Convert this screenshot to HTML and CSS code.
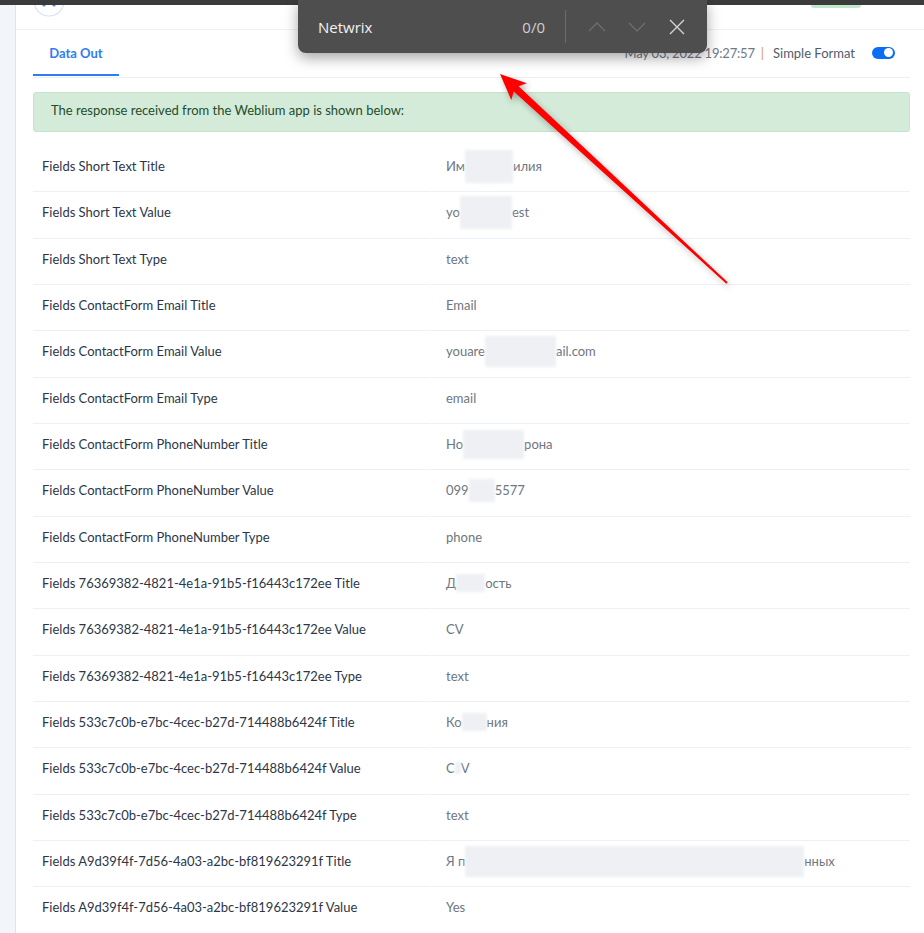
FILE: index.html
```html
<!DOCTYPE html>
<html lang="en">
<head>
	<meta charset="UTF-8">
	<title>Data Out</title>
	<link rel="stylesheet" href="styles.css">
</head>
<body>
	<div class="topbar"></div>
	<div class="layout">
		<div class="sidebar"></div>
		<div class="main">
			<div class="header">
				<svg class="logo" width="40" height="24" viewBox="0 0 40 24">
					<circle cx="17" cy="-4" r="15" fill="#fff" stroke="#d6e1f6" stroke-width="1.2"/>
					<circle cx="12" cy="0" r="1.6" fill="#4d7fe0"/>
					<circle cx="22" cy="0" r="1.6" fill="#4d7fe0"/>
				</svg>
				<div class="header-btn"></div>
			</div>
			<div class="content">
				<div class="tabs">
					<div class="tab active">Data Out</div>
					<div class="tab-info">
						<span class="date">May 03, 2022 19:27:57</span>
						<span class="pipe">|</span>
						<span class="format">Simple Format</span>
						<span class="toggle"><span class="knob"></span></span>
					</div>
				</div>
				<div class="alert">The response received from the Weblium app is shown below:</div>
				<div class="table">
					<div class="row"><div class="key">Fields Short Text Title</div><div class="val">Им<span class="blur b1"></span>илия</div></div>
					<div class="row"><div class="key">Fields Short Text Value</div><div class="val">yo<span class="blur b2"></span>est</div></div>
					<div class="row"><div class="key">Fields Short Text Type</div><div class="val">text</div></div>
					<div class="row"><div class="key">Fields ContactForm Email Title</div><div class="val">Email</div></div>
					<div class="row"><div class="key">Fields ContactForm Email Value</div><div class="val">youare<span class="blur b3"></span>ail.com</div></div>
					<div class="row"><div class="key">Fields ContactForm Email Type</div><div class="val">email</div></div>
					<div class="row"><div class="key">Fields ContactForm PhoneNumber Title</div><div class="val">Но<span class="blur b4"></span>рона</div></div>
					<div class="row"><div class="key">Fields ContactForm PhoneNumber Value</div><div class="val">099<span class="blur b5"></span>5577</div></div>
					<div class="row"><div class="key">Fields ContactForm PhoneNumber Type</div><div class="val">phone</div></div>
					<div class="row"><div class="key">Fields 76369382-4821-4e1a-91b5-f16443c172ee Title</div><div class="val">Д<span class="blur b6"></span>ость</div></div>
					<div class="row"><div class="key">Fields 76369382-4821-4e1a-91b5-f16443c172ee Value</div><div class="val">CV</div></div>
					<div class="row"><div class="key">Fields 76369382-4821-4e1a-91b5-f16443c172ee Type</div><div class="val">text</div></div>
					<div class="row"><div class="key">Fields 533c7c0b-e7bc-4cec-b27d-714488b6424f Title</div><div class="val">Ко<span class="blur b7"></span>ния</div></div>
					<div class="row"><div class="key">Fields 533c7c0b-e7bc-4cec-b27d-714488b6424f Value</div><div class="val">C<span class="blur b8"></span>V</div></div>
					<div class="row"><div class="key">Fields 533c7c0b-e7bc-4cec-b27d-714488b6424f Type</div><div class="val">text</div></div>
					<div class="row"><div class="key">Fields A9d39f4f-7d56-4a03-a2bc-bf819623291f Title</div><div class="val">Я п<span class="blur b9"></span>нных</div></div>
					<div class="row"><div class="key">Fields A9d39f4f-7d56-4a03-a2bc-bf819623291f Value</div><div class="val">Yes</div></div>
				</div>
			</div>
		</div>
	</div>

	<!-- browser find bar -->
	<div class="findbar">
		<span class="find-text">Netwrix</span>
		<span class="find-count">0/0</span>
		<span class="find-sep"></span>
		<svg class="find-icon" width="18" height="10" viewBox="0 0 18 10"><path d="M1 9 L9 1 L17 9" fill="none" stroke="#6e6e6e" stroke-width="1.3"/></svg>
		<svg class="find-icon" width="18" height="10" viewBox="0 0 18 10"><path d="M1 1 L9 9 L17 1" fill="none" stroke="#6e6e6e" stroke-width="1.3"/></svg>
		<svg class="find-icon" width="16" height="16" viewBox="0 0 16 16"><path d="M1 1 L15 15 M15 1 L1 15" fill="none" stroke="#d4d4d4" stroke-width="1.4"/></svg>
	</div>

	<!-- annotation arrow -->
	<svg class="arrow" width="924" height="933" viewBox="0 0 924 933">
		<polygon points="500,74 511.3,100.1 513.8,91.5 726.3,283.7 727.7,282.3 518.6,86.3 526.9,83.2" fill="#ff0000"/>
	</svg>
</body>
</html>
```

FILE: styles.css
```css
*{
	margin:0;
	padding:0;
	box-sizing:border-box;
}
html,body{
	height:933px;
	overflow:hidden;
}
body{
	font-family:"Lato","Open Sans",sans-serif;
	font-size:13px;
	color:#2c3647;
	background:#fff;
	position:relative;
}
.topbar{
	height:5px;
	background:#3b3b3b;
}
.layout{
	display:flex;
	height:928px;
}
.sidebar{
	width:16px;
	background:#f2f5f9;
	border-right:1px solid #d9e3f5;
}
.main{
	flex:1;
}
.header{
	height:25px;
	border-bottom:1px solid #edf2f9;
	display:flex;
	justify-content:space-between;
	padding-left:16px;
	padding-right:63px;
}
.logo{
	display:block;
}
.header-btn{
	width:50px;
	height:3px;
	background:#bfe8cd;
	border-radius:0 0 3px 3px;
}
.content{
	padding:0 14px 0 17px;
}
.tabs{
	height:48px;
	border-bottom:1px solid #e9f0f9;
	display:flex;
	justify-content:space-between;
	align-items:stretch;
}
.tab{
	width:86px;
	text-align:center;
	line-height:46px;
	font-weight:700;
	color:#2f7cf0;
	border-bottom:2px solid #2f7cf0;
	margin-bottom:1px;
}
.tab-info{
	display:flex;
	align-items:center;
	padding-right:15px;
	padding-bottom:2px;
}
.date{
	color:#6f7886;
	letter-spacing:-0.2px;
}
.pipe{
	color:#d59a62;
	margin:0 9px 0 6px;
}
.format{
	color:#525c6b;
}
.toggle{
	width:23px;
	height:12px;
	border-radius:6px;
	background:#0b6cf5;
	margin-left:17px;
	display:flex;
	justify-content:flex-end;
	align-items:center;
	padding:0 2px;
}
.knob{
	width:9px;
	height:9px;
	border-radius:50%;
	background:#fff;
}
.alert{
	margin-top:14px;
	height:40px;
	line-height:34px;
	padding-left:17px;
	background:#d4ebd9;
	border:1px solid #c5e3cc;
	border-radius:3px;
	color:#1f4d2c;
}
.table{
	margin-top:14px;
}
.row{
	display:grid;
	grid-template-columns:397px 1fr;
	column-gap:1px;
	height:46.33px;
}
.key,.val{
	display:flex;
	align-items:center;
	padding-bottom:5px;
	border-bottom:1px solid #edf1f7;
	white-space:nowrap;
}
.key{
	padding-left:9px;
	color:#2c3647;
}
.val{
	padding-left:15px;
	color:#6e7681;
}
.blur{
	display:inline-block;
	background:#eef0f3;
	filter:blur(1.5px);
}
.b1{width:48px;height:33px;}
.b2{width:52px;height:33px;}
.b3{width:71px;height:31px;}
.b4{width:61px;height:29px;}
.b5{width:26px;height:23px;}
.b6{width:29px;height:18px;}
.b7{width:25px;height:18px;}
.b8{width:6px;height:12px;}
.b9{width:339px;height:31px;}

.findbar{
	position:absolute;
	left:298px;
	top:0;
	width:409px;
	height:53px;
	background:#4e4e4e;
	border-radius:0 0 8px 8px;
	box-shadow:0 5px 14px rgba(0,0,0,0.35);
	display:flex;
	align-items:center;
	padding:0 22px 0 20px;
	font-family:"Open Sans","Noto Sans",sans-serif;
}
.find-text{
	color:#f2f2f2;
	font-size:15px;
	flex:1;
}
.find-count{
	color:#cfcfcf;
	font-size:15px;
}
.find-sep{
	width:1px;
	height:33px;
	background:#6c6c6c;
	margin:0 22px 0 20px;
}
.find-icon{
	margin-right:22px;
}
.find-icon:last-child{
	margin-right:0;
	margin-left:1px;
}
.arrow{
	position:absolute;
	left:0;
	top:0;
	pointer-events:none;
	filter:drop-shadow(2px 3px 3px rgba(0,0,0,0.3));
}
```
